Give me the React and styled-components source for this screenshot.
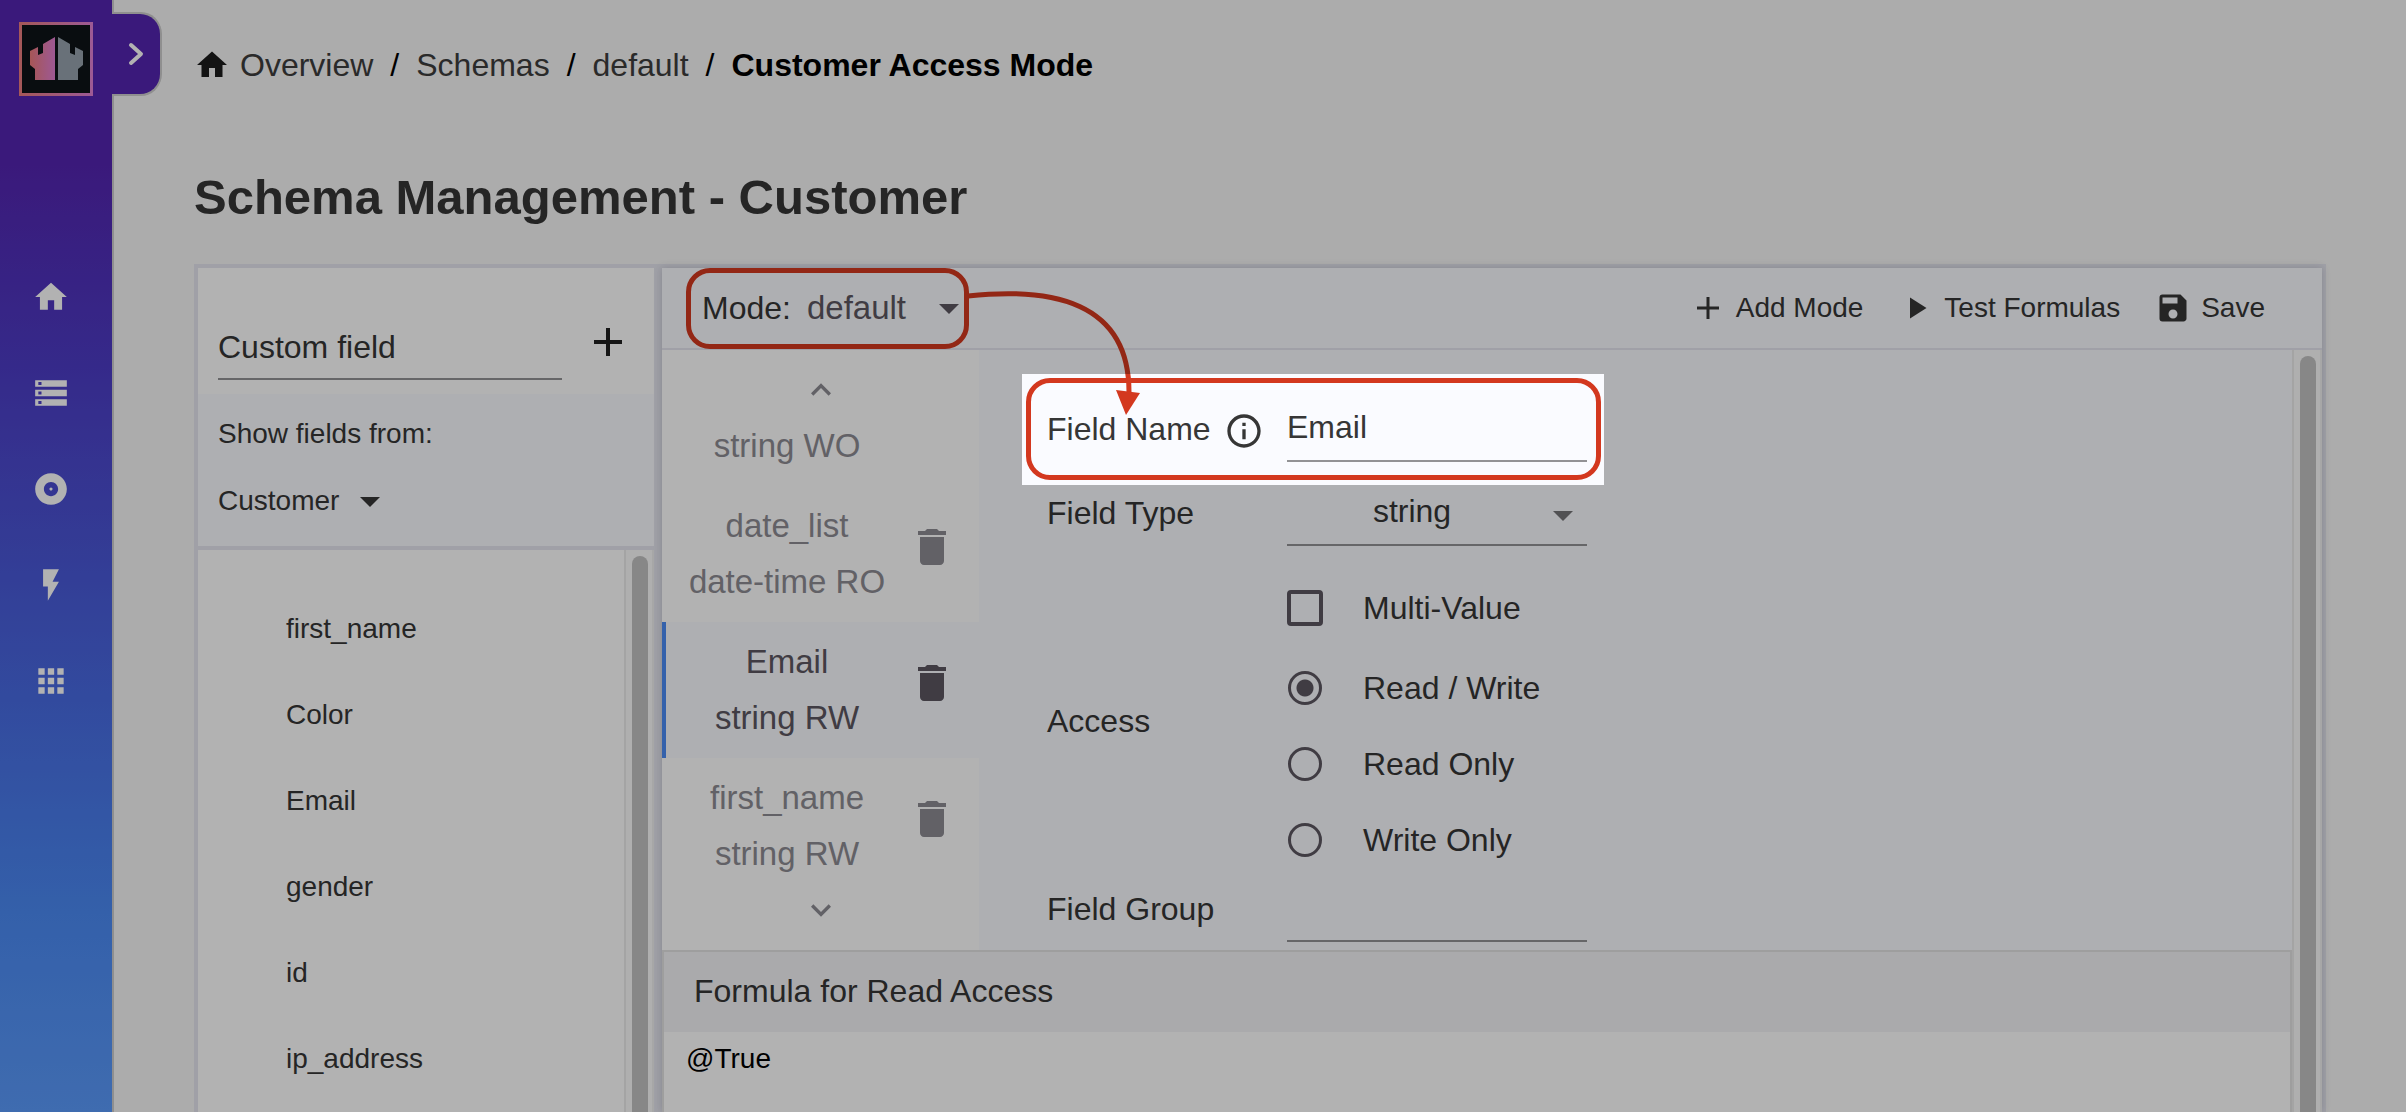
import React from "react";
import styled, { createGlobalStyle } from "styled-components";
import {
  MdAdd,
  MdAlbum,
  MdApps,
  MdArrowDropDown,
  MdDelete,
  MdFlashOn,
  MdHome,
  MdInfoOutline,
  MdKeyboardArrowDown,
  MdKeyboardArrowUp,
  MdPlayArrow,
  MdSave,
  MdStorage,
} from "react-icons/md";

const color = {
  page: "#f6f6f6",
  surface: "#ffffff",
  tint: "#fafbff",
  line: "#e5e6ef",
  softLine: "#e2e2e3",
  text: "#363636",
  muted: "#8d8c93",
  strong: "#5c5761",
  underline: "#929295",
  accent: "#4b8cf5",
  callout: "#d3381f",
  violet: "#5424b0",
};

const GlobalStyle = createGlobalStyle`
  *, *::before, *::after { box-sizing: border-box; }
  body {
    margin: 0;
    background: ${color.page};
    color: ${color.text};
    font-family: "Liberation Sans", Arial, Helvetica, sans-serif;
    font-size: 32px;
    line-height: 40px;
  }
  button, input, select, textarea {
    font: inherit;
    color: inherit;
    background: none;
    border: 0;
    border-radius: 0;
    margin: 0;
    padding: 0;
    outline: 0;
  }
  svg { display: block; flex: none; }
`;

const Page = styled.div`
  display: flex;
  height: 100vh;
  overflow: hidden;
`;

/* ---------- side navigation ---------- */

const Sidebar = styled.aside`
  position: relative;
  flex: none;
  width: 114px;
  padding: 22px 19px 0;
  border-right: 2px solid #cdcdcd;
  background: linear-gradient(
    ${color.violet} 0,
    ${color.violet} 14%,
    #4d3cc6 33%,
    #486be3 63%,
    #4b8af4 82%,
    #5b9bfc 100%
  ) padding-box;
`;

const SidebarToggle = styled.button`
  position: absolute;
  top: 14px;
  left: 100%;
  display: grid;
  place-items: center;
  width: 48px;
  height: 80px;
  color: #fff;
  background: ${color.violet};
  border-radius: 0 20px 20px 0;
  box-shadow: 2px 0 0 #cdcdcd, 1px 2px 0 #cdcdcd, 1px -2px 0 #cdcdcd;
`;

const Nav = styled.nav`
  display: flex;
  flex-direction: column;
  margin-top: 153px;
`;

const NavLink = styled.a`
  display: flex;
  align-items: center;
  height: 96px;
  padding-left: 13px;
  color: #fff;
`;

/* ---------- page frame ---------- */

const Main = styled.main`
  display: flex;
  flex: 1;
  flex-direction: column;
  min-width: 0;
  padding: 45px 80px 0;
`;

const Breadcrumb = styled.nav`
  display: flex;
  align-items: center;
`;

const Crumb = styled.a`
  display: flex;
  align-items: center;
  gap: 10px;
  color: #3d3d3d;
  text-decoration: none;

  svg { color: #1c1c1c; }
`;

const Slash = styled.span`
  padding: 0 17px;
  color: #000;
`;

const CurrentCrumb = styled.strong`
  color: #000;
`;

const Title = styled.h1`
  margin: 84px 0 39px;
  font-size: 49px;
  line-height: 56px;
`;

const Workspace = styled.div`
  display: grid;
  flex: 1;
  grid-template-columns: 456px minmax(0, 1fr);
  gap: 8px;
  min-height: 0;
  border: 4px solid ${color.line};
  border-bottom: 0;
  background: ${color.line};
`;

const ScrollTrack = styled.div`
  flex: none;
  width: 30px;
  padding: 6px 6px 0;
  border-left: 2px solid #ebebeb;
  border-right: 2px solid #f0f0f0;
  background: #fbfbfb;
`;

const ScrollThumb = styled.div`
  width: 16px;
  height: 100%;
  border-radius: 8px 8px 0 0;
  background: #c2c2c2;
`;

/* ---------- available fields panel ---------- */

const Panel = styled.section`
  display: flex;
  flex-direction: column;
  min-width: 0;
  min-height: 0;
  background: ${color.surface};
`;

const CustomField = styled.form`
  display: flex;
  align-items: flex-start;
  gap: 22px;
  height: 126px;
  padding: 50px 22px 14px 20px;
`;

const TextInput = styled.input`
  width: 100%;
  min-width: 0;
  height: 55px;
  line-height: 40px;
  padding-bottom: 13px;
  border-bottom: 2px solid ${color.underline};
  text-overflow: ellipsis;

  &::placeholder { color: ${color.text}; opacity: 1; }
`;

const CustomInput = styled(TextInput)`
  align-self: flex-end;
  flex: 1;
  height: 53px;
  padding-bottom: 11px;
`;

const IconButton = styled.button`
  display: grid;
  place-items: center;
  color: ${(p) => p.$color || "#202020"};
`;

const FieldSource = styled.div`
  display: flex;
  flex-direction: column;
  align-items: flex-start;
  gap: 31px;
  height: 156px;
  padding: 22px 20px 0;
  border-bottom: 4px solid ${color.line};
  background: ${color.tint};
  font-size: 28px;
  line-height: 36px;
`;

const SelectBox = styled.div`
  position: relative;
  display: flex;
  align-items: center;

  select {
    width: 100%;
    padding-right: ${(p) => p.$room}px;
    appearance: none;
  }

  svg {
    position: absolute;
    right: 0;
    pointer-events: none;
  }
`;

const ListArea = styled.div`
  display: flex;
  flex: 1;
  min-height: 0;
`;

const FieldNames = styled.ul`
  flex: 1;
  margin: 0;
  padding: 36px 0 0 88px;
  overflow: hidden;
  list-style: none;
  font-size: 28px;
  line-height: 86px;
`;

/* ---------- editor panel ---------- */

const Editor = styled(Panel)`
  background: ${color.tint};
  box-shadow: 0 0 8px rgba(60, 60, 80, 0.22);
`;

const Toolbar = styled.header`
  display: flex;
  flex: none;
  justify-content: space-between;
  height: 82px;
  padding: 0 57px 0 40px;
  border-bottom: 2px solid ${color.line};
`;

const ModePicker = styled.div`
  position: relative;
  display: flex;
  align-items: center;
  gap: 16px;

  select { color: ${color.strong}; font-size: 33px; }
  svg { color: ${color.strong}; }
`;

const Callout = styled.div`
  position: absolute;
  inset: ${(p) => p.$inset};
  border: 5px solid ${color.callout};
  border-radius: 24px;
  pointer-events: none;
`;

const CalloutArrow = styled.svg`
  position: absolute;
  top: 0;
  left: 100%;
  z-index: 1;
  overflow: visible;
  pointer-events: none;
`;

const Actions = styled.div`
  display: flex;
  align-items: center;
  gap: 35px;
  font-size: 28px;
  line-height: 36px;
`;

const Action = styled.button`
  display: flex;
  align-items: center;
  gap: 10px;
`;

const EditorContent = styled.div`
  display: flex;
  flex: 1;
  flex-direction: column;
  min-width: 0;
`;

const FieldRow = styled.div`
  display: flex;
  height: 600px;
  flex: none;
`;

const FieldPicker = styled.div`
  display: grid;
  flex: none;
  grid-template-rows: 74px 1fr 74px;
  width: 317px;
  background: ${color.surface};
`;

const PageButton = styled(IconButton)`
  color: ${color.muted};
  padding: ${(p) => (p.$up ? "6px 0 0" : "0 0 6px")};
`;

const FieldCards = styled.div`
  display: flex;
  flex-direction: column;
  min-height: 0;
  overflow: hidden;
`;

const FieldCard = styled.div`
  display: grid;
  flex: none;
  grid-template-columns: 242px 48px;
  align-content: end;
  height: ${(p) => (p.$partial ? 62 : 136)}px;
  padding-bottom: 21px;
  border-left: 4px solid ${(p) => (p.$active ? color.accent : "transparent")};
  background: ${(p) => (p.$active ? color.tint : "transparent")};
  color: ${(p) => (p.$active ? color.strong : color.muted)};
`;

const FieldSummary = styled.div`
  display: flex;
  flex-direction: column;
  align-items: center;
  gap: 18px;
  font-size: 33px;
  line-height: 38px;
`;

const DeleteButton = styled(IconButton)`
  align-self: start;
  padding-top: 16px;
`;

const Form = styled.form`
  display: flex;
  flex: 1;
  flex-direction: column;
  align-items: flex-start;
  padding: 57px 68px 0;
`;

const Row = styled.div`
  position: relative;
  display: grid;
  grid-template-columns: 240px 300px;
  align-items: start;
  margin-top: ${(p) => p.$gap || 0}px;
`;

const RowLabel = styled.label`
  display: flex;
  align-items: flex-end;
  gap: 13px;
  padding-top: ${(p) => p.$drop || 0}px;
  line-height: 44px;
`;

const TypeSelect = styled(SelectBox)`
  height: 55px;
  border-bottom: 2px solid ${color.underline};
  align-items: flex-start;

  select { text-align-last: center; height: 40px; }
  svg { color: #757578; }
`;

const Choice = styled.label`
  display: flex;
  grid-column: 2;
  align-items: center;
  gap: 40px;
  height: 76px;
  white-space: nowrap;
`;

const Checkbox = styled.input.attrs({ type: "checkbox" })`
  flex: none;
  width: 36px;
  height: 36px;
  border: 4px solid ${color.strong};
  border-radius: 4px;
  appearance: none;
`;

const Radio = styled.input.attrs({ type: "radio" })`
  flex: none;
  width: 34px;
  height: 34px;
  margin: 0 1px;
  border: 3px solid ${color.strong};
  border-radius: 50%;
  appearance: none;

  &:checked {
    background: radial-gradient(circle, ${color.strong} 8px, transparent 9px);
  }
`;

/* Dims everything on the page except the area it encloses. */
const Spotlight = styled.div`
  position: absolute;
  inset: -33px -17px -23px -25px;
  z-index: 10;
  box-shadow: 0 0 0 4000px rgba(0, 0, 0, 0.3);
  pointer-events: none;
`;

const Formula = styled.section`
  display: flex;
  flex: 1;
  flex-direction: column;
  min-height: 0;
  border: 2px solid ${color.softLine};
  border-bottom: 0;
  background: ${color.surface};
`;

const FormulaTitle = styled.label`
  flex: none;
  height: 80px;
  padding: 19px 30px;
  background: #f4f4f7;
`;

const FormulaText = styled.textarea`
  flex: 1;
  min-height: 0;
  padding: 9px 22px;
  overflow: hidden;
  resize: none;
  color: #000;
  font-size: 28px;
  line-height: 36px;
`;

const NAV = [
  ["Home", MdHome],
  ["Storage", MdStorage],
  ["Records", MdAlbum],
  ["Actions", MdFlashOn],
  ["Apps", MdApps],
];

const FIELD_NAMES = ["first_name", "Color", "Email", "gender", "id", "ip_address"];

const CARDS = [
  { type: "string WO" },
  { name: "date_list", type: "date-time RO" },
  { name: "Email", type: "string RW", active: true },
  { name: "first_name", type: "string RW" },
];

function Logo() {
  const half = "M36 15 24 22V31L19 33V25L11 29V43L16 47V58H36Z";
  return (
    <svg width="74" height="74" viewBox="0 0 74 74" role="img" aria-label="Logo">
      <defs>
        <linearGradient id="frame" x1="0" x2="1" y1="0" y2="0">
          <stop offset="0" stopColor="#ec7f7f" />
          <stop offset="1" stopColor="#e182d6" />
        </linearGradient>
        <linearGradient id="tower" x1="0" x2="1" y1="0" y2="0">
          <stop offset="0" stopColor="#ee7c7c" />
          <stop offset="1" stopColor="#e27fd4" />
        </linearGradient>
      </defs>
      <rect width="74" height="74" fill="url(#frame)" />
      <rect x="3" y="3" width="68" height="68" fill="#0d1418" />
      <path d={half} fill="url(#tower)" />
      <path d={half} fill="#97a3ae" transform="translate(75 0) scale(-1 1)" />
    </svg>
  );
}

function ThinPlus() {
  return (
    <svg width="36" height="36" viewBox="0 0 36 36" fill="none" stroke="currentColor" strokeWidth="3">
      <path d="M18 7V29M7 18H29" />
    </svg>
  );
}

function ModeArrow() {
  return (
    <CalloutArrow width="180" height="160" viewBox="0 0 180 160">
      <path
        d="M-5 28C78 19 156 33 156 124"
        fill="none"
        stroke={color.callout}
        strokeWidth="5"
      />
      <path d="M143 122 167 125 153 147Z" fill={color.callout} />
    </CalloutArrow>
  );
}

export default function App() {
  return (
    <Page>
      <GlobalStyle />
      <Sidebar>
        <Logo />
        <SidebarToggle aria-label="Expand navigation">
          <svg width="16" height="24" viewBox="0 0 16 24" fill="none" stroke="currentColor" strokeWidth="4" strokeLinecap="round" strokeLinejoin="round">
            <path d="M3 3 13 12 3 21" />
          </svg>
        </SidebarToggle>
        <Nav aria-label="Main">
          {NAV.map(([label, Icon]) => (
            <NavLink href="#" key={label} aria-label={label}>
              <Icon size={38} />
            </NavLink>
          ))}
        </Nav>
      </Sidebar>

      <Main>
        <Breadcrumb aria-label="Breadcrumb">
          <Crumb href="#"><MdHome size={36} />Overview</Crumb>
          <Slash>/</Slash>
          <Crumb href="#">Schemas</Crumb>
          <Slash>/</Slash>
          <Crumb href="#">default</Crumb>
          <Slash>/</Slash>
          <CurrentCrumb>Customer Access Mode</CurrentCrumb>
        </Breadcrumb>
        <Title>Schema Management - Customer</Title>

        <Workspace>
          <Panel>
            <CustomField>
              <CustomInput placeholder="Custom field" aria-label="Custom field" />
              <IconButton type="button" aria-label="Add custom field">
                <MdAdd size={48} />
              </IconButton>
            </CustomField>
            <FieldSource>
              <label htmlFor="source">Show fields from:</label>
              <SelectBox $room={54}>
                <select id="source"><option>Customer</option></select>
                <MdArrowDropDown size={48} />
              </SelectBox>
            </FieldSource>
            <ListArea>
              <FieldNames>
                {FIELD_NAMES.map((name) => <li key={name}>{name}</li>)}
              </FieldNames>
              <ScrollTrack><ScrollThumb /></ScrollTrack>
            </ListArea>
          </Panel>

          <Editor>
            <Toolbar>
              <ModePicker>
                <label htmlFor="mode">Mode:</label>
                <SelectBox $room={66}>
                  <select id="mode"><option>default</option></select>
                  <MdArrowDropDown size={48} />
                </SelectBox>
                <Callout $inset="0 4px -1px -16px" />
                <ModeArrow />
              </ModePicker>
              <Actions>
                <Action><ThinPlus />Add Mode</Action>
                <Action><MdPlayArrow size={36} />Test Formulas</Action>
                <Action><MdSave size={36} />Save</Action>
              </Actions>
            </Toolbar>

            <ListArea>
              <EditorContent>
                <FieldRow>
                  <FieldPicker>
                    <PageButton aria-label="Previous fields" $color={color.muted} $up>
                      <MdKeyboardArrowUp size={40} />
                    </PageButton>
                    <FieldCards>
                      {CARDS.map((card, i) => (
                        <FieldCard key={i} $active={card.active} $partial={!card.name}>
                          <FieldSummary>
                            {card.name && <span>{card.name}</span>}
                            <span>{card.type}</span>
                          </FieldSummary>
                          {card.name && (
                            <DeleteButton aria-label={`Delete ${card.name}`} $color="inherit">
                              <MdDelete size={48} />
                            </DeleteButton>
                          )}
                        </FieldCard>
                      ))}
                    </FieldCards>
                    <PageButton aria-label="Next fields" $color={color.muted}>
                      <MdKeyboardArrowDown size={40} />
                    </PageButton>
                  </FieldPicker>

                  <Form>
                    <Row>
                      <RowLabel htmlFor="name">Field Name<MdInfoOutline size={40} /></RowLabel>
                      <TextInput id="name" defaultValue="Email" />
                      <Spotlight><Callout $inset="4px 3px 5px 4px" /></Spotlight>
                    </Row>
                    <Row $gap={29}>
                      <RowLabel htmlFor="type">Field Type</RowLabel>
                      <TypeSelect $room={50}>
                        <select id="type"><option>string</option></select>
                        <MdArrowDropDown size={48} />
                      </TypeSelect>
                    </Row>
                    <Row $gap={24}>
                      <Choice><Checkbox />Multi-Value</Choice>
                    </Row>
                    <Row $gap={4} role="radiogroup" aria-labelledby="access">
                      <RowLabel as="span" id="access" $drop={49}>Access</RowLabel>
                      <div>
                        <Choice><Radio name="access" defaultChecked />Read / Write</Choice>
                        <Choice><Radio name="access" />Read Only</Choice>
                        <Choice><Radio name="access" />Write Only</Choice>
                      </div>
                    </Row>
                    <Row $gap={9}>
                      <RowLabel htmlFor="group">Field Group</RowLabel>
                      <TextInput id="group" />
                    </Row>
                  </Form>
                </FieldRow>

                <Formula>
                  <FormulaTitle htmlFor="formula">Formula for Read Access</FormulaTitle>
                  <FormulaText id="formula" defaultValue="@True" spellCheck={false} />
                </Formula>
              </EditorContent>
              <ScrollTrack><ScrollThumb /></ScrollTrack>
            </ListArea>
          </Editor>
        </Workspace>
      </Main>
    </Page>
  );
}
